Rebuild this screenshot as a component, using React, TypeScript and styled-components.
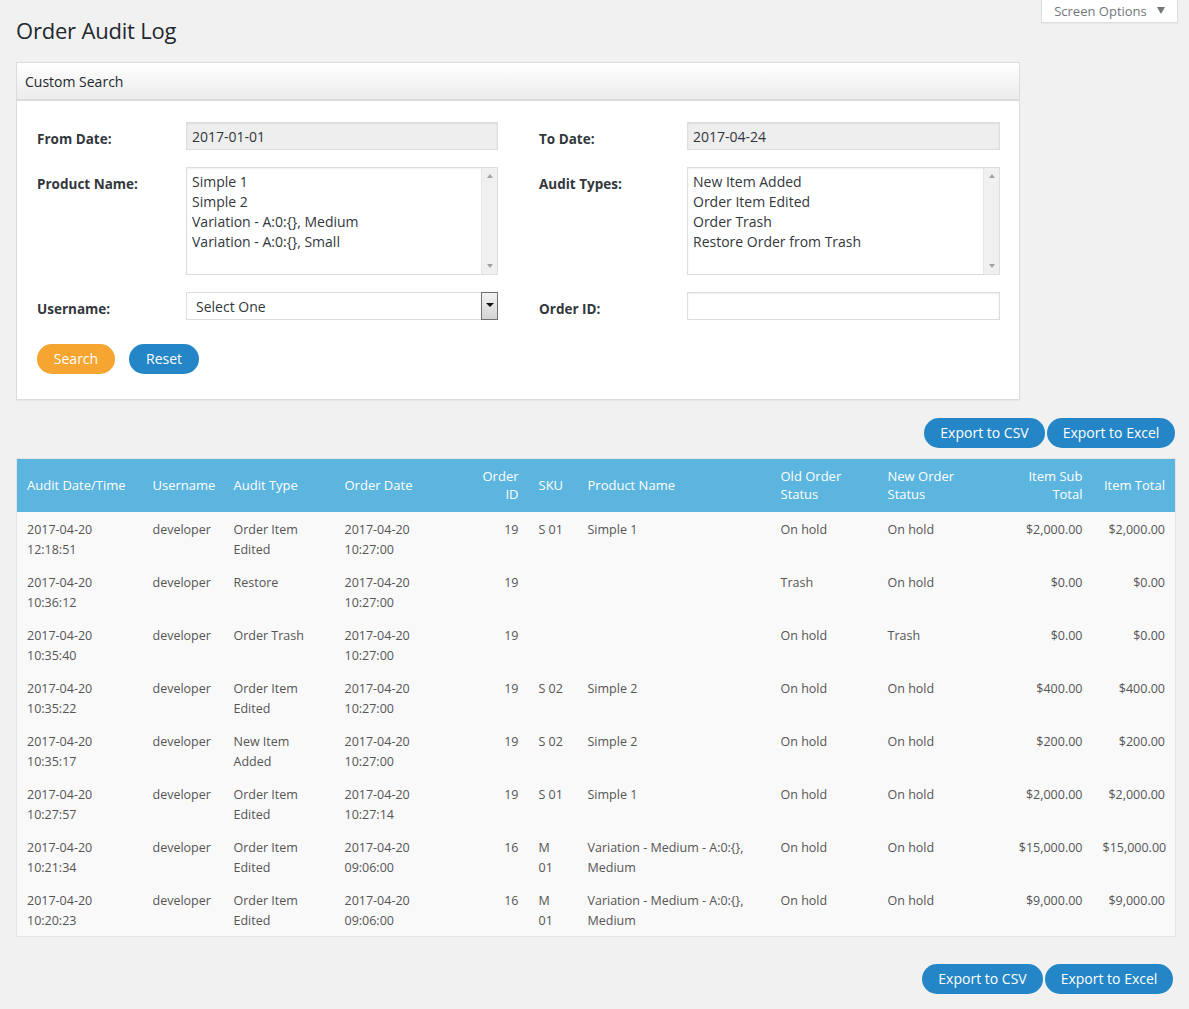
import React from "react";
import styled, { createGlobalStyle } from "styled-components";

const GlobalStyle = createGlobalStyle`
  html, body { margin: 0; padding: 0; background: #f1f1f1; }
  body { font-family: "Open Sans", "Noto Sans", sans-serif; color: #444; font-size: 13px; }
  * { box-sizing: border-box; }
`;

const Page = styled.div`
  padding: 0 14px 20px 16px;
  min-height: 1009px;
`;

const Header = styled.div`
  display: flex;
  justify-content: space-between;
  align-items: flex-start;
  margin-right: -3px;
`;

const Title = styled.h1`
  margin: 16px 0 0;
  font-size: 22px;
  font-weight: 400;
  color: #23282d;
  line-height: 29px;
  letter-spacing: -0.2px;
`;

const ScreenOptions = styled.div`
  width: 137px;
  height: 23px;
  background: #fff;
  border: 1px solid #ddd;
  border-top: none;
  box-shadow: 0 1px 1px rgba(0, 0, 0, 0.04);
  display: flex;
  align-items: center;
  justify-content: center;
  gap: 6px;
  color: #72777c;
  font-size: 13px;
  padding-bottom: 1px;
`;

const Caret = styled.span`
  width: 0;
  height: 0;
  border-left: 4px solid transparent;
  border-right: 4px solid transparent;
  border-top: 7px solid #72777c;
  margin-left: 4px;
`;

const Panel = styled.section`
  margin-top: 17px;
  width: 1004px;
  background: #fff;
  border: 1px solid #dcdcdc;
  box-shadow: 0 1px 1px rgba(0, 0, 0, 0.04);
`;

const PanelHeader = styled.div`
  height: 38px;
  display: flex;
  align-items: center;
  padding: 1px 8px 0;
  background: linear-gradient(#ffffff, #ececec);
  border-bottom: 2px solid #dcdcdc;
  font-size: 14px;
  color: #23282d;
`;

const PanelBody = styled.div`
  padding: 21px 19px 25px 20px;
`;

const FormGrid = styled.div`
  display: grid;
  grid-template-columns: 461px 461px;
  column-gap: 41px;
  row-gap: 17px;
`;

const Field = styled.div<{ $labelWidth: number }>`
  display: grid;
  grid-template-columns: ${(p) => p.$labelWidth}px 1fr;
  align-items: start;
`;

const Label = styled.label`
  font-weight: 700;
  font-size: 13.5px;
  color: #32373c;
  line-height: 18px;
  padding-top: 8px;
`;

const TextInput = styled.div<{ $readonly?: boolean }>`
  height: 28px;
  border: 1px solid #ddd;
  background: ${(p) => (p.$readonly ? "#eeeeee" : "#fff")};
  box-shadow: inset 0 1px 2px rgba(0, 0, 0, 0.07);
  padding: 1px 5px 0;
  display: flex;
  align-items: center;
  font-size: 14px;
  color: #32373c;
`;

const ListBox = styled.div`
  height: 108px;
  border: 1px solid #ddd;
  background: #fff;
  display: flex;
  box-shadow: inset 0 1px 2px rgba(0, 0, 0, 0.07);
`;

const ListItems = styled.div`
  flex: 1;
  padding: 4px 5px;
  font-size: 14px;
  line-height: 20px;
  color: #32373c;
`;

const ScrollTrack = styled.div`
  width: 16px;
  background: #f0f0f0;
  border-left: 1px solid #e6e6e6;
  display: flex;
  flex-direction: column;
  justify-content: space-between;
  align-items: center;
  padding: 6px 0 6px;
`;

const Arrow = styled.span<{ $down?: boolean }>`
  width: 0;
  height: 0;
  border-left: 3px solid transparent;
  border-right: 3px solid transparent;
  ${(p) => (p.$down ? "border-top: 4px solid #a3a3a3;" : "border-bottom: 4px solid #a3a3a3;")}
`;

const SelectBox = styled.div`
  height: 28px;
  border: 1px solid #ddd;
  background: #fff;
  display: flex;
  align-items: center;
  justify-content: space-between;
  font-size: 14px;
  color: #32373c;
  padding-left: 9px;
`;

const SelectButton = styled.span`
  width: 17px;
  height: 28px;
  margin-right: -1px;
  border: 1px solid #707070;
  background: linear-gradient(#f2f2f2, #d4d4d4);
  display: flex;
  align-items: center;
  justify-content: center;
  padding-bottom: 3px;
`;

const BlackArrow = styled.span`
  width: 0;
  height: 0;
  border-left: 4px solid transparent;
  border-right: 4px solid transparent;
  border-top: 4px solid #111;
`;

const ButtonRow = styled.div`
  display: flex;
  gap: 14px;
  margin-top: 24px;
`;

const PillButton = styled.button<{ $variant?: "orange" | "blue"; $width: number }>`
  width: ${(p) => p.$width}px;
  height: 30px;
  border: none;
  border-radius: 15px;
  background: ${(p) => (p.$variant === "orange" ? "#f6a530" : "#2486c6")};
  color: #fff;
  font-family: inherit;
  font-size: 14px;
  padding: 0 0 2px;
  cursor: pointer;
`;

const ExportBar = styled.div<{ $top: number; $shift?: number }>`
  display: flex;
  justify-content: flex-end;
  gap: 2px;
  margin-top: ${(p) => p.$top}px;
  margin-right: ${(p) => p.$shift || 0}px;
`;

const Table = styled.table`
  margin-top: 10px;
  width: 1159px;
  border-collapse: collapse;
  table-layout: fixed;
  background: #f9f9f9;
  border: 1px solid #e5e5e5;
`;

const Th = styled.th<{ $right?: boolean }>`
  background: #5bb5df;
  color: #fff;
  font-weight: 400;
  font-size: 13px;
  line-height: 18px;
  text-align: ${(p) => (p.$right ? "right" : "left")};
  vertical-align: middle;
  padding: 8px 10px 9px;
  height: 53px;
`;

const Td = styled.td<{ $right?: boolean; $tight?: boolean }>`
  font-size: 12.5px;
  line-height: 20px;
  color: #555;
  text-align: ${(p) => (p.$right ? "right" : "left")};
  vertical-align: top;
  padding: 8px ${(p) => (p.$tight ? 12 : 10)}px 5px 10px;
  height: 53px;
`;

type Row = {
  date: string;
  time: string;
  type: string;
  od: string;
  ot: string;
  id: string;
  sku: string;
  product: string;
  oldS: string;
  newS: string;
  sub: string;
  total: string;
};

const rows: Row[] = [
  { date: "2017-04-20", time: "12:18:51", type: "Order Item Edited", od: "2017-04-20", ot: "10:27:00", id: "19", sku: "S 01", product: "Simple 1", oldS: "On hold", newS: "On hold", sub: "$2,000.00", total: "$2,000.00" },
  { date: "2017-04-20", time: "10:36:12", type: "Restore", od: "2017-04-20", ot: "10:27:00", id: "19", sku: "", product: "", oldS: "Trash", newS: "On hold", sub: "$0.00", total: "$0.00" },
  { date: "2017-04-20", time: "10:35:40", type: "Order Trash", od: "2017-04-20", ot: "10:27:00", id: "19", sku: "", product: "", oldS: "On hold", newS: "Trash", sub: "$0.00", total: "$0.00" },
  { date: "2017-04-20", time: "10:35:22", type: "Order Item Edited", od: "2017-04-20", ot: "10:27:00", id: "19", sku: "S 02", product: "Simple 2", oldS: "On hold", newS: "On hold", sub: "$400.00", total: "$400.00" },
  { date: "2017-04-20", time: "10:35:17", type: "New Item Added", od: "2017-04-20", ot: "10:27:00", id: "19", sku: "S 02", product: "Simple 2", oldS: "On hold", newS: "On hold", sub: "$200.00", total: "$200.00" },
  { date: "2017-04-20", time: "10:27:57", type: "Order Item Edited", od: "2017-04-20", ot: "10:27:14", id: "19", sku: "S 01", product: "Simple 1", oldS: "On hold", newS: "On hold", sub: "$2,000.00", total: "$2,000.00" },
  { date: "2017-04-20", time: "10:21:34", type: "Order Item Edited", od: "2017-04-20", ot: "09:06:00", id: "16", sku: "M 01", product: "Variation - Medium - A:0:{}, Medium", oldS: "On hold", newS: "On hold", sub: "$15,000.00", total: "$15,000.00" },
  { date: "2017-04-20", time: "10:20:23", type: "Order Item Edited", od: "2017-04-20", ot: "09:06:00", id: "16", sku: "M 01", product: "Variation - Medium - A:0:{}, Medium", oldS: "On hold", newS: "On hold", sub: "$9,000.00", total: "$9,000.00" },
];

const widths = [126, 81, 111, 135, 59, 49, 193, 107, 112, 103, 83];

function Exports({ top, shift }: { top: number; shift?: number }) {
  return (
    <ExportBar $top={top} $shift={shift}>
      <PillButton $variant="blue" $width={121}>Export to CSV</PillButton>
      <PillButton $variant="blue" $width={128}>Export to Excel</PillButton>
    </ExportBar>
  );
}

function Scroll() {
  return (
    <ScrollTrack>
      <Arrow />
      <Arrow $down />
    </ScrollTrack>
  );
}

export default function App() {
  return (
    <Page>
      <GlobalStyle />
      <Header>
        <Title>Order Audit Log</Title>
        <ScreenOptions>
          Screen Options <Caret />
        </ScreenOptions>
      </Header>

      <Panel>
        <PanelHeader>Custom Search</PanelHeader>
        <PanelBody>
          <FormGrid>
            <Field $labelWidth={149}>
              <Label>From Date:</Label>
              <TextInput $readonly>2017-01-01</TextInput>
            </Field>
            <Field $labelWidth={148}>
              <Label>To Date:</Label>
              <TextInput $readonly>2017-04-24</TextInput>
            </Field>
            <Field $labelWidth={149}>
              <Label>Product Name:</Label>
              <ListBox>
                <ListItems>
                  <div>Simple 1</div>
                  <div>Simple 2</div>
                  <div>Variation - A:0:{"{}"}, Medium</div>
                  <div>Variation - A:0:{"{}"}, Small</div>
                </ListItems>
                <Scroll />
              </ListBox>
            </Field>
            <Field $labelWidth={148}>
              <Label>Audit Types:</Label>
              <ListBox>
                <ListItems>
                  <div>New Item Added</div>
                  <div>Order Item Edited</div>
                  <div>Order Trash</div>
                  <div>Restore Order from Trash</div>
                </ListItems>
                <Scroll />
              </ListBox>
            </Field>
            <Field $labelWidth={149}>
              <Label>Username:</Label>
              <SelectBox>
                Select One
                <SelectButton>
                  <BlackArrow />
                </SelectButton>
              </SelectBox>
            </Field>
            <Field $labelWidth={148}>
              <Label>Order ID:</Label>
              <TextInput />
            </Field>
          </FormGrid>
          <ButtonRow>
            <PillButton $variant="orange" $width={78}>Search</PillButton>
            <PillButton $variant="blue" $width={70}>Reset</PillButton>
          </ButtonRow>
        </PanelBody>
      </Panel>

      <Exports top={18} />

      <Table>
        <colgroup>
          {widths.map((w, i) => (
            <col key={i} style={{ width: w }} />
          ))}
        </colgroup>
        <thead>
          <tr>
            <Th>Audit Date/Time</Th>
            <Th>Username</Th>
            <Th>Audit Type</Th>
            <Th>Order Date</Th>
            <Th $right>Order ID</Th>
            <Th>SKU</Th>
            <Th>Product Name</Th>
            <Th>Old Order Status</Th>
            <Th>New Order Status</Th>
            <Th $right>Item Sub Total</Th>
            <Th $right>Item Total</Th>
          </tr>
        </thead>
        <tbody>
          {rows.map((r, i) => (
            <tr key={i}>
              <Td>{r.date}<br />{r.time}</Td>
              <Td>developer</Td>
              <Td>{r.type}</Td>
              <Td>{r.od}<br />{r.ot}</Td>
              <Td $right>{r.id}</Td>
              <Td $tight>{r.sku}</Td>
              <Td>{r.product}</Td>
              <Td>{r.oldS}</Td>
              <Td>{r.newS}</Td>
              <Td $right>{r.sub}</Td>
              <Td $right>{r.total}</Td>
            </tr>
          ))}
        </tbody>
      </Table>

      <Exports top={27} shift={2} />
    </Page>
  );
}
